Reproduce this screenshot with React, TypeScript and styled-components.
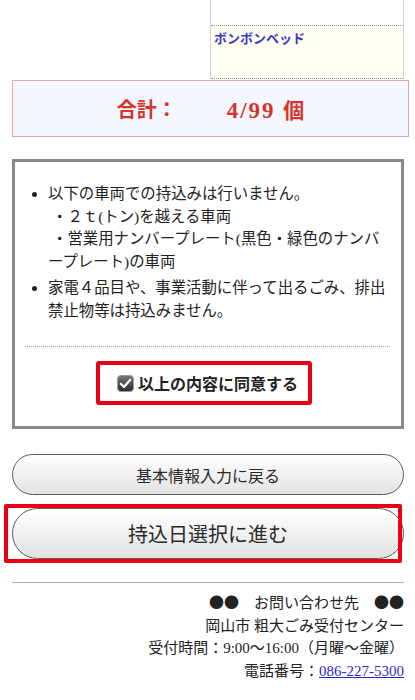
import React from 'react';
import styled, { createGlobalStyle } from 'styled-components';

const GlobalStyle = createGlobalStyle`
    body {
        margin: 0;
        background: #fff;
        color: #222;
        font-family: 'Liberation Serif', 'Noto Sans CJK JP', serif;
    }
`;

const Page = styled.div`
    width: 415px;
    padding-bottom: 20px;
`;

const ItemTable = styled.div`
    display: flex;
`;

const BlankCell = styled.div`
    flex: 1;
`;

const ItemColumn = styled.div`
    width: 192px;
    margin-right: 11px;
    border-left: 1px solid #d2d2d2;
    border-right: 1px solid #d2d2d2;
`;

const ItemRow = styled.div<{ $tone: 'plain' | 'item' }>`
    box-sizing: border-box;
    height: ${(p) => (p.$tone === 'item' ? 53 : 26)}px;
    padding: 5px 3px;
    background: ${(p) => (p.$tone === 'item' ? '#fffff2' : '#fff')};
    border-bottom: 1px dotted #9a9a9a;
    color: #3838c6;
    font-size: 13px;
    line-height: 16px;
    font-weight: bold;
`;

const TotalBox = styled.div`
    box-sizing: border-box;
    height: 57px;
    margin: 1px 6px 0 12px;
    border: 1px solid #e9a4a4;
    background: #f5f7fe;
    display: flex;
    align-items: center;
    justify-content: center;
    color: #d6342a;
    font-size: 20px;
    font-weight: bold;
`;

const TotalCount = styled.span`
    margin-left: 50px;
    font-size: 23px;
    letter-spacing: 2px;
`;

const TotalUnit = styled.span`
    font-size: 21px;
    letter-spacing: 0;
`;

const AgreementBox = styled.div`
    margin: 22px 11px 0 12px;
    border: 3px solid #8a8a8a;
    padding: 21px 0 21px;
    display: flex;
    flex-direction: column;
    align-items: center;
`;

const NoticeList = styled.ul`
    align-self: stretch;
    margin: 0;
    padding: 0 10px 0 33px;
    font-size: 15.4px;
    line-height: 22.5px;
`;

const NoticeItem = styled.li`
    & + & {
        margin-top: 4px;
    }
`;

const SubLine = styled.span`
    padding-left: 4px;
`;

const Separator = styled.div`
    align-self: stretch;
    margin: 24px 11px 14px 10px;
    border-top: 1px dotted #a8a8a8;
`;

const AgreeLabel = styled.label`
    display: inline-flex;
    align-items: center;
    gap: 4px;
    height: 36px;
    padding: 0 10px 0 17px;
    margin-right: 8px;
    border: 4px solid #e60012;
    border-radius: 3px;
    font-size: 16px;
    font-weight: bold;
    color: #222;
`;

const PillButton = styled.button<{ $size: 'normal' | 'large' }>`
    display: block;
    width: 100%;
    height: ${(p) => (p.$size === 'large' ? 51 : 41)}px;
    border: 1px solid #5a5a5a;
    border-radius: ${(p) => (p.$size === 'large' ? 26 : 21)}px;
    background: linear-gradient(#ffffff, #e2e2e2);
    color: #2a2a2a;
    font-family: 'Noto Sans CJK JP', sans-serif;
    font-size: ${(p) => (p.$size === 'large' ? 20 : 16)}px;
    padding: 0;
    cursor: pointer;
`;

const ButtonSlot = styled.div<{ $gap: number }>`
    position: relative;
    margin: ${(p) => p.$gap}px 11px 0 12px;
`;

const Highlight = styled.div`
    position: absolute;
    top: -4px;
    bottom: -4px;
    left: -8px;
    right: 2px;
    border: 4px solid #e60012;
    border-radius: 2px;
    pointer-events: none;
`;

const Rule = styled.hr`
    margin: 23px 11px 0 12px;
    border: none;
    border-top: 1px solid #aab0ee;
`;

const Contact = styled.div`
    margin: 8px 11px 0 0;
    text-align: right;
    font-size: 15px;
    line-height: 22.5px;
`;

const Marks = styled.span`
    font-family: 'Noto Sans CJK JP', sans-serif;
`;

const PhoneLink = styled.a`
    color: #2a2acc;
    text-decoration: underline;
`;

function CheckedIcon(): React.ReactElement {
    return (
        <svg width="17" height="17" viewBox="0 0 17 17">
            <defs>
                <linearGradient id="chk" x1="0" y1="0" x2="0" y2="1">
                    <stop offset="0" stopColor="#777" />
                    <stop offset="1" stopColor="#2a2a2a" />
                </linearGradient>
            </defs>
            <rect x="0.5" y="0.5" width="16" height="16" rx="3.5" fill="url(#chk)" stroke="#9a9a9a" />
            <path d="M3.8 8.8 L7 12 L13.2 4.8" fill="none" stroke="#fff" strokeWidth="2.2" strokeLinecap="round" strokeLinejoin="round" />
        </svg>
    );
}

export default function App(): React.ReactElement {
    return (
        <>
            <GlobalStyle />
            <Page>
                <ItemTable>
                    <BlankCell />
                    <ItemColumn>
                        <ItemRow $tone="plain" />
                        <ItemRow $tone="item">ボンボンベッド</ItemRow>
                    </ItemColumn>
                </ItemTable>

                <TotalBox>
                    合計：
                    <TotalCount>
                        4/99 <TotalUnit>個</TotalUnit>
                    </TotalCount>
                </TotalBox>

                <AgreementBox>
                    <NoticeList>
                        <NoticeItem>
                            以下の車両での持込みは行いません。
                            <br />
                            <SubLine>・２ｔ(トン)を越える車両</SubLine>
                            <br />
                            <SubLine>・営業用ナンバープレート(黒色・緑色のナンバ</SubLine>
                            <br />
                            ープレート)の車両
                        </NoticeItem>
                        <NoticeItem>
                            家電４品目や、事業活動に伴って出るごみ、排出
                            <br />
                            禁止物等は持込みません。
                        </NoticeItem>
                    </NoticeList>
                    <Separator />
                    <AgreeLabel>
                        <CheckedIcon />
                        以上の内容に同意する
                    </AgreeLabel>
                </AgreementBox>

                <ButtonSlot $gap={25}>
                    <PillButton $size="normal">基本情報入力に戻る</PillButton>
                </ButtonSlot>
                <ButtonSlot $gap={13}>
                    <PillButton $size="large">持込日選択に進む</PillButton>
                    <Highlight />
                </ButtonSlot>

                <Rule />
                <Contact>
                    <Marks>●●</Marks>　お問い合わせ先　<Marks>●●</Marks>
                    <br />
                    岡山市 粗大ごみ受付センター
                    <br />
                    受付時間：9:00～16:00（月曜～金曜）
                    <br />
                    電話番号：<PhoneLink href="#">086-227-5300</PhoneLink>
                </Contact>
            </Page>
        </>
    );
}
